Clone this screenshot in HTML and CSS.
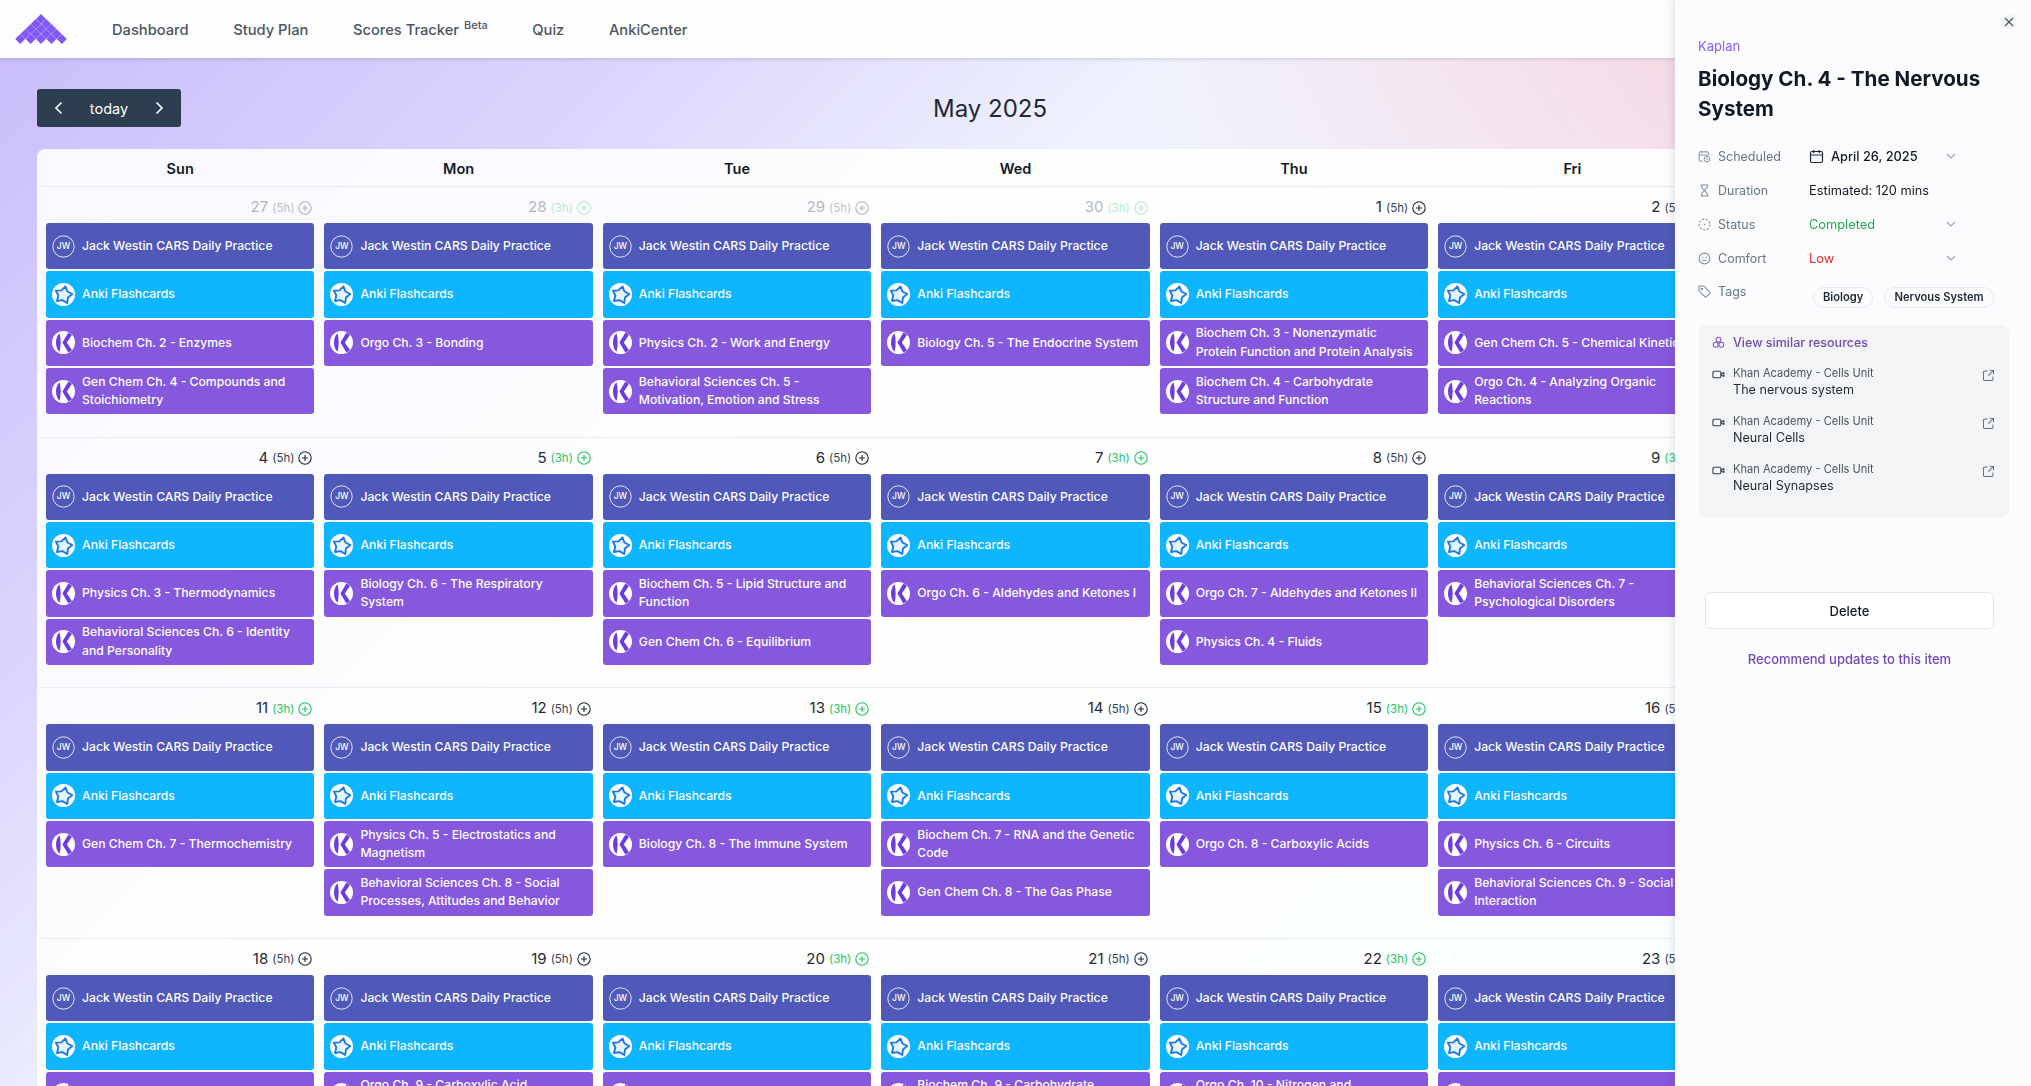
FILE: index.html
```html
<!DOCTYPE html>
<html lang="en">
<head>
    <meta charset="UTF-8">
    <meta name="viewport" content="width=device-width, initial-scale=1.0">
    <title>Study Plan</title>
    <link rel="stylesheet" href="styles.css">
</head>
<body>

<!-- shared icon shapes -->
<svg class="icon-defs" width="0" height="0">
    <defs>
        <symbol id="icon-jw" viewBox="0 0 23 23">
            <circle cx="11.5" cy="11.5" r="10.7" fill="none" stroke="#fff" stroke-opacity="0.85" stroke-width="1"/>
        </symbol>
        <symbol id="icon-anki" viewBox="0 0 23 23">
            <circle cx="11.5" cy="11.5" r="11.5" fill="#fff"/>
            <path d="M13.5 3.4L15.4 8.5 20.3 11 16 14.6 15.2 20 10.4 17.1 5 18 6.3 12.5 3.9 7.6 9.4 7.4z" fill="#e4f5ff" stroke="#1a78ea" stroke-width="1.9" stroke-linejoin="round"/>
        </symbol>
        <symbol id="icon-kaplan" viewBox="0 0 23 23">
            <circle cx="11.5" cy="11.5" r="11.5" fill="#fff"/>
            <path d="M7.6 2.2C2.8 6 2.8 17 7.6 20.8 9 15 9 8 7.6 2.2z" fill="#6d3be0"/>
            <path d="M16.4 1.6L20 3.8 14.8 11.5 20 19.2 16.4 21.4 10.4 11.5z" fill="#6d3be0"/>
        </symbol>
        <symbol id="icon-plus" viewBox="0 0 14 14">
            <circle cx="7" cy="7" r="6.2" fill="none" stroke="currentColor" stroke-width="1.1"/>
            <path d="M7 4v6M4 7h6" fill="none" stroke="currentColor" stroke-width="1.1"/>
        </symbol>
        <symbol id="icon-video" viewBox="0 0 14 14">
            <rect x="1" y="3.5" width="8.6" height="7" rx="1.3" fill="none" stroke="currentColor" stroke-width="1.2"/>
            <path d="M9.8 6.4l3-1.6v4.4l-3-1.6z" fill="none" stroke="currentColor" stroke-width="1.2" stroke-linejoin="round"/>
        </symbol>
        <symbol id="icon-open" viewBox="0 0 14 14">
            <path d="M6 2.2H2.6a1 1 0 0 0-1 1v8.2a1 1 0 0 0 1 1h8.2a1 1 0 0 0 1-1V8" fill="none" stroke="currentColor" stroke-width="1.1"/>
            <path d="M8.4 1.6h4v4M12.2 1.8L6.6 7.4" fill="none" stroke="currentColor" stroke-width="1.1"/>
        </symbol>
        <symbol id="icon-chevron" viewBox="0 0 12 12">
            <path d="M2 4l4 4 4-4" fill="none" stroke="currentColor" stroke-width="1.2"/>
        </symbol>
        <symbol id="diamond" viewBox="0 0 10 10">
            <path d="M5 0l5 5-5 5-5-5z" fill="#8259f6"/>
        </symbol>
    </defs>
</svg>

<header class="navbar">
    <svg class="logo" width="52" height="31" viewBox="0 0 52 31">
        <use href="#diamond" x="21" y="0" width="10" height="10"/>
        <use href="#diamond" x="15.8" y="5" width="10" height="10"/>
        <use href="#diamond" x="26.2" y="5" width="10" height="10"/>
        <use href="#diamond" x="10.6" y="10" width="10" height="10"/>
        <use href="#diamond" x="21" y="10" width="10" height="10"/>
        <use href="#diamond" x="31.4" y="10" width="10" height="10"/>
        <use href="#diamond" x="5.4" y="15" width="10" height="10"/>
        <use href="#diamond" x="15.8" y="15" width="10" height="10"/>
        <use href="#diamond" x="26.2" y="15" width="10" height="10"/>
        <use href="#diamond" x="36.6" y="15" width="10" height="10"/>
        <use href="#diamond" x="0.2" y="20" width="10" height="10"/>
        <use href="#diamond" x="10.6" y="20" width="10" height="10"/>
        <use href="#diamond" x="21" y="20" width="10" height="10"/>
        <use href="#diamond" x="31.4" y="20" width="10" height="10"/>
        <use href="#diamond" x="41.8" y="20" width="10" height="10"/>
    </svg>
    <nav class="nav-links">
        <a href="#">Dashboard</a>
        <a href="#">Study Plan</a>
        <a href="#">Scores Tracker <sup>Beta</sup></a>
        <a href="#">Quiz</a>
        <a href="#">AnkiCenter</a>
    </nav>
</header>

<main class="page">
    <div class="toolbar">
        <div class="today-group">
            <button class="today-btn"><svg width="16" height="16" viewBox="0 0 16 16"><path d="M10.5 2.5L5 8l5.5 5.5" fill="none" stroke="#fff" stroke-width="1.6"/></svg></button>
            <button class="today-btn today-label">today</button>
            <button class="today-btn"><svg width="16" height="16" viewBox="0 0 16 16"><path d="M5.5 2.5L11 8l-5.5 5.5" fill="none" stroke="#fff" stroke-width="1.6"/></svg></button>
        </div>
        <h2 class="month-title">May 2025</h2>
        <div class="toolbar-spacer"></div>
    </div>

    <div class="calendar">
        <div class="weekdays">
            <div>Sun</div>
            <div>Mon</div>
            <div>Tue</div>
            <div>Wed</div>
            <div>Thu</div>
            <div>Fri</div>
            <div>Sat</div>
        </div>
        <div id="weeks"></div>
    </div>
</main>

<aside class="drawer">
    <button class="close-btn"><svg width="12" height="12" viewBox="0 0 12 12"><path d="M2 2l8 8M10 2l-8 8" fill="none" stroke="#4b5563" stroke-width="1.2"/></svg></button>
    <div class="provider">Kaplan</div>
    <h1 class="drawer-title">Biology Ch. 4 - The Nervous System</h1>

    <div class="props">
        <div class="prop-label">
            <svg width="13" height="13" viewBox="0 0 14 14" fill="none" stroke="#7b88a1" stroke-width="1"><path d="M5 12H2.2a1 1 0 0 1-1-1V3a1 1 0 0 1 1-1h8.2a1 1 0 0 1 1 1v2M1.2 5.4h10M4 .8v2.4M8.6.8v2.4"/><circle cx="9.6" cy="9.8" r="3"/><path d="M9.6 8.4v1.5l1 .6"/></svg>
            Scheduled
        </div>
        <div class="prop-value date-value">
            <svg width="15" height="15" viewBox="0 0 15 15" fill="none" stroke="#1f2937" stroke-width="1.2"><rect x="1.5" y="2.5" width="12" height="11" rx="1.5"/><path d="M1.5 6h12M4.7 1v3M10.3 1v3"/></svg>
            April 26, 2025
        </div>
        <svg class="chevron"><use href="#icon-chevron"/></svg>

        <div class="prop-label">
            <svg width="13" height="13" viewBox="0 0 14 14" fill="none" stroke="#7b88a1" stroke-width="1.1"><path d="M3 1h8M3 13h8M4 1v2.5L7 7l3-3.5V1M4 13v-2.5L7 7l3 3.5V13"/></svg>
            Duration
        </div>
        <div class="prop-value wide">Estimated: 120 mins</div>

        <div class="prop-label">
            <svg width="13" height="13" viewBox="0 0 14 14" fill="none" stroke="#7b88a1" stroke-width="1.1"><circle cx="7" cy="7" r="5.8" stroke-dasharray="2.4 1.6"/><circle cx="7" cy="7" r="0.9" fill="#7b88a1" stroke="none"/></svg>
            Status
        </div>
        <div class="prop-value status-done">Completed</div>
        <svg class="chevron"><use href="#icon-chevron"/></svg>

        <div class="prop-label">
            <svg width="13" height="13" viewBox="0 0 14 14" fill="none" stroke="#7b88a1" stroke-width="1.1"><circle cx="7" cy="7" r="5.8"/><path d="M4.6 9h4.8"/><circle cx="5" cy="5.6" r="0.7" fill="#7b88a1" stroke="none"/><circle cx="9" cy="5.6" r="0.7" fill="#7b88a1" stroke="none"/></svg>
            Comfort
        </div>
        <div class="prop-value comfort-low">Low</div>
        <svg class="chevron"><use href="#icon-chevron"/></svg>

        <div class="prop-label tag-label">
            <svg width="13" height="13" viewBox="0 0 14 14" fill="none" stroke="#7b88a1" stroke-width="1.1"><path d="M1 1.8v4.4l6.6 6.6a1 1 0 0 0 1.4 0l3.8-3.8a1 1 0 0 0 0-1.4L6.2 1H1.8a.8.8 0 0 0-.8.8z"/><circle cx="4.2" cy="4.2" r="0.8"/></svg>
            Tags
        </div>
        <div class="prop-value wide tags">
            <span class="tag">Biology</span>
            <span class="tag">Nervous System</span>
        </div>
    </div>

    <section class="similar">
        <div class="similar-head">
            <svg width="13" height="13" viewBox="0 0 14 14" fill="none" stroke="#7e57c2" stroke-width="1.1"><circle cx="7" cy="4" r="2.6"/><circle cx="4" cy="9.4" r="2.6"/><circle cx="10" cy="9.4" r="2.6"/></svg>
            View similar resources
        </div>
        <div class="resource">
            <svg class="video-icon"><use href="#icon-video"/></svg>
            <div class="resource-text"><div class="resource-sub">Khan Academy - Cells Unit</div><div class="resource-name">The nervous system</div></div>
            <svg class="open-icon"><use href="#icon-open"/></svg>
        </div>
        <div class="resource">
            <svg class="video-icon"><use href="#icon-video"/></svg>
            <div class="resource-text"><div class="resource-sub">Khan Academy - Cells Unit</div><div class="resource-name">Neural Cells</div></div>
            <svg class="open-icon"><use href="#icon-open"/></svg>
        </div>
        <div class="resource">
            <svg class="video-icon"><use href="#icon-video"/></svg>
            <div class="resource-text"><div class="resource-sub">Khan Academy - Cells Unit</div><div class="resource-name">Neural Synapses</div></div>
            <svg class="open-icon"><use href="#icon-open"/></svg>
        </div>
    </section>

    <button class="delete-btn">Delete</button>
    <a href="#" class="recommend">Recommend updates to this item</a>
</aside>

<script src="script.js"></script>
</body>
</html>
```

FILE: styles.css
```css
html, body {
    margin: 0;
    height: 100%;
    overflow: hidden;
}
body {
    font-family: Inter, "Liberation Sans", sans-serif;
    color: #111827;
    background:
        radial-gradient(900px 500px at 100% 0%, rgba(247, 200, 212, 0.95), rgba(247, 205, 215, 0) 100%),
        radial-gradient(1000px 600px at 90% 100%, rgba(190, 245, 245, 0.9), rgba(190, 245, 245, 0) 100%),
        linear-gradient(135deg, #c9bcfb 0%, #dbd5fd 22%, #f0f3fd 40%, #f4f7fd 100%);
}
.icon-defs {
    position: absolute;
}
.navbar {
    display: flex;
    align-items: center;
    height: 58px;
    padding-left: 15px;
    background-color: #fdfdff;
    box-shadow: 0 1px 4px rgba(60, 50, 110, 0.2);
}
.logo {
    flex: none;
}
.nav-links {
    display: flex;
    gap: 44.6px;
    margin-left: 45px;
    padding-top: 2px;
}
.nav-links a {
    font-size: 14.7px;
    font-weight: 500;
    color: #4b5563;
    text-decoration: none;
}
.nav-links sup {
    margin-left: 1px;
    font-size: 11px;
    line-height: 0;
}
.page {
    padding: 31px 37px 0;
}
.toolbar {
    display: flex;
    justify-content: space-between;
    align-items: center;
    height: 38px;
    margin-bottom: 22px;
}
.today-group {
    display: flex;
    align-items: center;
    width: 144px;
    height: 38px;
    background-color: #2c3e50;
    border-radius: 3px;
}
.today-btn {
    display: flex;
    align-items: center;
    justify-content: center;
    width: 44px;
    height: 38px;
    padding: 0;
    border: 0;
    color: #fff;
    background: none;
    font-family: inherit;
    font-size: 14.5px;
}
.today-label {
    flex: 1;
}
.month-title {
    margin: 0;
    font-size: 24px;
    font-weight: 400;
    color: #1f2937;
}
.toolbar-spacer {
    width: 195px;
}
.calendar {
    width: 1949px;
    padding: 0 4px;
    background-color: rgba(255, 255, 255, 0.88);
    border-radius: 8px 8px 0 0;
}
.weekdays {
    display: grid;
    grid-template-columns: repeat(7, 1fr);
    height: 37px;
    line-height: 39px;
    text-align: center;
    font-size: 14.5px;
    font-weight: 600;
    color: #111827;
    border-bottom: 1px solid #e6e9f0;
}
.week {
    display: grid;
    grid-template-columns: repeat(7, 1fr);
    box-sizing: border-box;
    height: 250.67px;
    border-bottom: 1px solid #e9ecf3;
}
.day {
    padding: 0 5px;
    min-width: 0;
}
.day-head {
    display: flex;
    justify-content: flex-end;
    align-items: center;
    gap: 4px;
    height: 36px;
    padding: 3px 2px 0 0;
    box-sizing: border-box;
}
.day-num {
    font-size: 15px;
    color: #1f2937;
}
.day-hours {
    margin-top: 2px;
    font-size: 11.5px;
    color: #374151;
}
.day-add {
    width: 14px;
    height: 14px;
    margin-top: 2px;
    color: #1f2937;
}
.light .day-hours,
.light .day-add {
    color: #22c55e;
}
.muted .day-head {
    opacity: 0.33;
}
.event {
    display: flex;
    align-items: center;
    gap: 7px;
    box-sizing: border-box;
    height: 46.33px;
    margin-bottom: 2px;
    padding: 0 4px 0 6px;
    border-radius: 3px;
    color: #fff;
    font-size: 12.2px;
    font-weight: 500;
    line-height: 18.5px;
}
.event-icon {
    position: relative;
    flex: none;
    width: 23px;
    height: 23px;
}
.event-icon svg {
    display: block;
    width: 23px;
    height: 23px;
}
.jw-mark {
    position: absolute;
    top: 0;
    left: 0;
    width: 23px;
    line-height: 23px;
    text-align: center;
    font-size: 8.5px;
    font-weight: 500;
}
.event-jw {
    background-color: #5059b9;
}
.event-anki {
    background-color: #0eb5ff;
}
.event-kaplan {
    background-color: #8558dd;
}
.drawer {
    position: fixed;
    top: 0;
    right: 0;
    bottom: 0;
    box-sizing: border-box;
    width: 356px;
    padding: 38px 22px 0 23px;
    background-color: #fcfcfe;
    box-shadow: -2px 0 8px rgba(40, 40, 60, 0.12);
}
.close-btn {
    position: absolute;
    top: 15px;
    right: 15px;
    display: flex;
    align-items: center;
    justify-content: center;
    width: 14px;
    height: 14px;
    padding: 0;
    border: 0;
    background-color: #f3f4f6;
    border-radius: 3px;
}
.provider {
    font-size: 13px;
    line-height: 16px;
    color: #8b5cf6;
}
.drawer-title {
    margin: 10px 0 0;
    font-size: 20.6px;
    font-weight: 700;
    line-height: 30px;
    color: #111827;
}
.props {
    display: grid;
    grid-template-columns: 111px 136px 1fr;
    grid-auto-rows: 34px;
    align-items: center;
    margin-top: 15px;
    font-size: 12.8px;
}
.prop-label {
    display: flex;
    align-items: center;
    gap: 7px;
    font-size: 12.5px;
    color: #64748b;
}
.prop-value.wide {
    grid-column: span 2;
}
.date-value {
    display: flex;
    align-items: center;
    gap: 7px;
    font-weight: 500;
}
.chevron {
    width: 12px;
    height: 12px;
    color: #94a3b8;
}
.status-done {
    color: #22a94f;
}
.comfort-low {
    color: #ef2b2b;
}
.tags {
    display: flex;
    gap: 11px;
    padding: 10px 0 0 4px;
}
.tag-label {
    padding-bottom: 1px;
}
.tag {
    padding: 0 9px;
    line-height: 19px;
    font-size: 11.2px;
    font-weight: 600;
    color: #1f2937;
    border: 1px solid #e6eaf3;
    border-radius: 11px;
}
.similar {
    box-sizing: border-box;
    height: 193px;
    margin-top: 16px;
    padding: 8px 14px 0;
    background-color: #f3f4f6;
    border-radius: 8px;
}
.similar-head {
    display: flex;
    align-items: center;
    gap: 8px;
    height: 18px;
    font-size: 12.5px;
    font-weight: 500;
    color: #7048b8;
}
.resource {
    display: flex;
    align-items: flex-start;
    gap: 8px;
    height: 48px;
}
.similar-head + .resource {
    margin-top: 15px;
}
.resource-text {
    flex: 1;
}
.resource-sub {
    font-size: 11.1px;
    line-height: 15px;
    color: #4b5563;
}
.resource-name {
    font-size: 12.6px;
    line-height: 18px;
    color: #1f2937;
}
.video-icon {
    flex: none;
    width: 13px;
    height: 13px;
    margin-top: 2px;
    color: #374151;
}
.open-icon {
    flex: none;
    width: 13px;
    height: 13px;
    margin-top: 3px;
    color: #6b7280;
}
.delete-btn {
    display: block;
    width: 289px;
    height: 37px;
    margin: 74px 0 0 7px;
    background-color: #fff;
    border: 1px solid #e2e8f0;
    border-radius: 6px;
    font-family: inherit;
    font-size: 13px;
    font-weight: 500;
    color: #111827;
}
.recommend {
    display: block;
    margin: 22px 0 0 7px;
    width: 289px;
    text-align: center;
    font-size: 13px;
    font-weight: 500;
    color: #7048b8;
    text-decoration: none;
}
```

FILE: script.js
```js
const JW = { type: 'jw', title: 'Jack Westin CARS Daily Practice' };
const ANKI = { type: 'anki', title: 'Anki Flashcards' };

// every study day starts with the two daily items
const weeks = [
    [
        { num: 27, hours: 5, muted: true, items: ['Biochem Ch. 2 - Enzymes', 'Gen Chem Ch. 4 - Compounds and Stoichiometry'] },
        { num: 28, hours: 3, muted: true, items: ['Orgo Ch. 3 - Bonding'] },
        { num: 29, hours: 5, muted: true, items: ['Physics Ch. 2 - Work and Energy', 'Behavioral Sciences Ch. 5 - Motivation, Emotion and Stress'] },
        { num: 30, hours: 3, muted: true, items: ['Biology Ch. 5 - The Endocrine System'] },
        { num: 1, hours: 5, items: ['Biochem Ch. 3 - Nonenzymatic<br>Protein Function and Protein Analysis', 'Biochem Ch. 4 - Carbohydrate Structure and Function'] },
        { num: 2, hours: 5, items: ['Gen Chem Ch. 5 - Chemical Kinetics', 'Orgo Ch. 4 - Analyzing Organic Reactions'] },
        { num: 3, hours: 3, items: [] }
    ],
    [
        { num: 4, hours: 5, items: ['Physics Ch. 3 - Thermodynamics', 'Behavioral Sciences Ch. 6 - Identity and Personality'] },
        { num: 5, hours: 3, items: ['Biology Ch. 6 - The Respiratory System'] },
        { num: 6, hours: 5, items: ['Biochem Ch. 5 - Lipid Structure and Function', 'Gen Chem Ch. 6 - Equilibrium'] },
        { num: 7, hours: 3, items: ['Orgo Ch. 6 - Aldehydes and Ketones I'] },
        { num: 8, hours: 5, items: ['Orgo Ch. 7 - Aldehydes and Ketones II', 'Physics Ch. 4 - Fluids'] },
        { num: 9, hours: 3, items: ['Behavioral Sciences Ch. 7 - Psychological Disorders'] },
        { num: 10, hours: 3, items: [] }
    ],
    [
        { num: 11, hours: 3, items: ['Gen Chem Ch. 7 - Thermochemistry'] },
        { num: 12, hours: 5, items: ['Physics Ch. 5 - Electrostatics and Magnetism', 'Behavioral Sciences Ch. 8 - Social Processes, Attitudes and Behavior'] },
        { num: 13, hours: 3, items: ['Biology Ch. 8 - The Immune System'] },
        { num: 14, hours: 5, items: ['Biochem Ch. 7 - RNA and the Genetic Code', 'Gen Chem Ch. 8 - The Gas Phase'] },
        { num: 15, hours: 3, items: ['Orgo Ch. 8 - Carboxylic Acids'] },
        { num: 16, hours: 5, items: ['Physics Ch. 6 - Circuits', 'Behavioral Sciences Ch. 9 - Social Interaction'] },
        { num: 17, hours: 3, items: [] }
    ],
    [
        { num: 18, hours: 5, items: ['Biochem Ch. 8 - Biological Membranes'] },
        { num: 19, hours: 5, items: ['Orgo Ch. 9 - Carboxylic Acid Derivatives'] },
        { num: 20, hours: 3, items: ['Physics Ch. 7'] },
        { num: 21, hours: 5, items: ['Biochem Ch. 9 - Carbohydrate Metabolism I'] },
        { num: 22, hours: 3, items: ['Orgo Ch. 10 - Nitrogen and Phosphorus Compounds'] },
        { num: 23, hours: 5, items: ['Gen Chem Ch. 9'] },
        { num: 24, hours: 3, items: [] }
    ]
];

function iconHtml(type) {
    if (type === 'jw') {
        return '<svg><use href="#icon-jw"/></svg><span class="jw-mark">JW</span>';
    }
    if (type === 'anki') {
        return '<svg><use href="#icon-anki"/></svg>';
    }
    return '<svg><use href="#icon-kaplan"/></svg>';
}

function eventHtml(event) {
    return `<div class="event event-${event.type}">
        <span class="event-icon">${iconHtml(event.type)}</span>
        <span class="event-text">${event.title}</span>
    </div>`;
}

function dayHtml(day) {
    let items = day.items.map(title => ({ type: 'kaplan', title: title }));
    let events = [JW, ANKI].concat(items).map(eventHtml).join('');
    let classes = 'day';
    if (day.hours === 3) classes += ' light';
    if (day.muted) classes += ' muted';
    return `<div class="${classes}">
        <div class="day-head">
            <span class="day-num">${day.num}</span>
            <span class="day-hours">(${day.hours}h)</span>
            <svg class="day-add"><use href="#icon-plus"/></svg>
        </div>
        ${events}
    </div>`;
}

document.getElementById('weeks').innerHTML = weeks.map(week =>
    `<div class="week">${week.map(dayHtml).join('')}</div>`
).join('');
```
